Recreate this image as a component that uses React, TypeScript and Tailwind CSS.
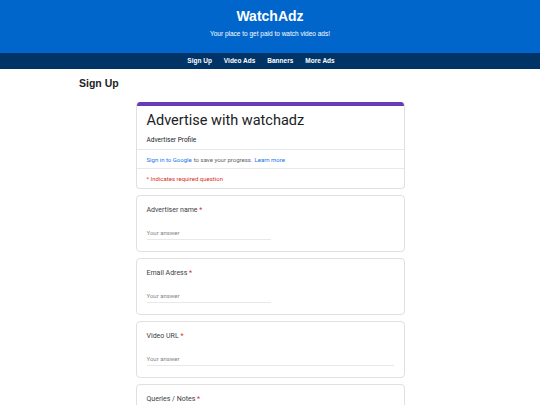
const questions = [
  { label: "Advertiser name", wide: false },
  { label: "Email Adress", wide: false },
  { label: "Video URL", wide: true },
  { label: "Queries / Notes", wide: true },
];

function QuestionCard({ label, wide }: { label: string; wide: boolean }) {
  return (
    <div className="h-[57px] shrink-0 rounded-[4px] border border-[#e0e0e0] bg-white px-[10px] pt-[10px]">
      <p className="text-[7px] leading-[9px] text-[#3c4043]">
        {label} <span className="text-[#d93025]">*</span>
      </p>
      <div
        className={`mt-[14px] border-b border-[#e8e8e8] pb-[2px] text-[6px] leading-[8px] text-[#80868b] ${
          wide ? "w-full" : "w-[124px]"
        }`}
      >
        Your answer
      </div>
    </div>
  );
}

export default function App() {
  return (
    <div className="h-[405px] w-[540px] overflow-hidden bg-white">
      {/* Header */}
      <header className="flex h-[53px] flex-col items-center bg-[#0066cc] pt-[8px] font-['Liberation_Sans',Arial,sans-serif] text-white">
        <h1 className="text-[14px] font-bold leading-[17px]">WatchAdz</h1>
        <p className="mt-[5px] text-[6.5px] leading-[8px]">Your place to get paid to watch video ads!</p>
      </header>

      {/* Nav */}
      <nav className="flex h-[16px] items-center justify-center gap-[12px] bg-[#003366] pr-[18px] font-['Liberation_Sans',Arial,sans-serif] text-[6.5px] font-bold text-white">
        <span>Sign Up</span>
        <span>Video Ads</span>
        <span>Banners</span>
        <span>More Ads</span>
      </nav>

      <h2 className="pl-[79px] pt-[8px] font-['Liberation_Sans',Arial,sans-serif] text-[10.5px] font-bold leading-[12px] text-[#222]">
        Sign Up
      </h2>

      {/* Form */}
      <div className="mx-auto mt-[13px] flex w-[269px] flex-col gap-[6px] font-['Roboto',sans-serif]">
        <div className="shrink-0 overflow-hidden rounded-[4px] border border-t-0 border-[#e0e0e0] bg-white">
          <div className="h-[4px] bg-[#673ab7]" />
          <div className="border-b border-[#e8e8e8] px-[10px] pt-[5px] pb-[5px]">
            <div className="text-[14.5px] leading-[20px] text-[#202124]">Advertise with watchadz</div>
            <div className="mt-[5px] text-[6.5px] leading-[8px] text-[#202124]">Advertiser Profile</div>
          </div>
          <div className="flex h-[19px] items-center border-b border-[#e8e8e8] px-[10px] text-[6px] text-[#5f6368]">
            <span className="text-[#1a73e8]">Sign in to Google</span>
            <span className="ml-[2px]">to save your progress.</span>
            <span className="ml-[2px] text-[#1a73e8]">Learn more</span>
          </div>
          <div className="flex h-[19px] items-center px-[10px] text-[6px] text-[#d93025]">* Indicates required question</div>
        </div>

        {questions.map((q) => (
          <QuestionCard key={q.label} label={q.label} wide={q.wide} />
        ))}
      </div>
    </div>
  );
}
